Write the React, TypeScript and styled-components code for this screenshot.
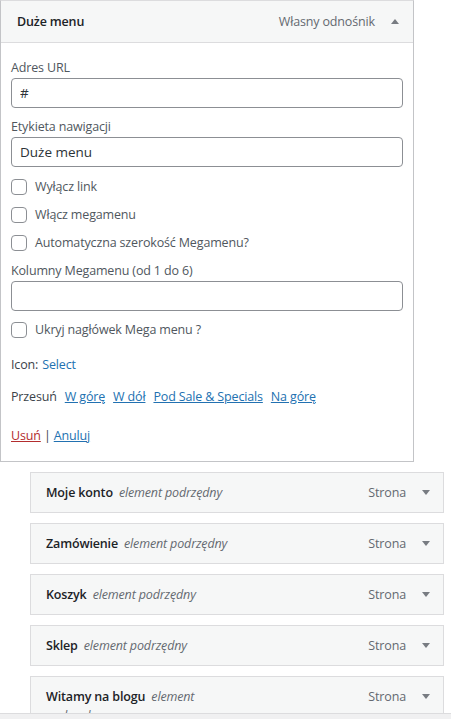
import React from 'react';
import styled, { createGlobalStyle, css } from 'styled-components';

const GlobalStyle = createGlobalStyle`
    html, body {
        margin: 0;
        padding: 0;
        background: #ffffff;
        overflow: hidden;
    }

    body {
        font-family: "Open Sans", "Noto Sans", "Liberation Sans", sans-serif;
        font-size: 12.5px;
        letter-spacing: -0.15px;
        color: #3c434a;
    }
`;

const Page = styled.div`
    display: flex;
    flex-direction: column;
    height: 100vh;
    overflow: hidden;
`;

const Content = styled.div`
    flex: 1;
    overflow: hidden;
`;

const BottomBar = styled.div`
    height: 5px;
    flex-shrink: 0;
    background: #f0f0f1;
    border-top: 1px solid #dcdcde;
`;

const Panel = styled.div`
    width: 414px;
    box-sizing: border-box;
    border: 1px solid #c3c4c7;
    border-top-color: #dcdcde;
    background: #ffffff;
`;

const Caret = styled.span<{ up?: boolean }>(
    ({ up = false }) => css`
        display: inline-block;
        width: 0;
        height: 0;
        border-left: 4px solid transparent;
        border-right: 4px solid transparent;
        ${up ? 'border-bottom: 5px solid #787c82;' : 'border-top: 5px solid #787c82;'}
    `
);

const PanelHeader = styled.div`
    display: flex;
    align-items: center;
    justify-content: space-between;
    height: 41px;
    padding: 0 14px 0 16px;
    background: #f6f7f7;
    border-bottom: 1px solid #dcdcde;
`;

const HeaderTitle = styled.span`
    font-weight: 600;
    color: #1d2327;
`;

const Controls = styled.span<{ gap?: string }>(
    ({ gap = '16px' }) => css`
        display: flex;
        align-items: center;
        gap: ${gap};
        color: #646970;
    `
);

const Settings = styled.div`
    display: flex;
    flex-direction: column;
    padding: 15px 10px 16px 10px;
`;

const Field = styled.div<{ margin?: string }>(
    ({ margin = '0 0 10px' }) => css`
        display: flex;
        flex-direction: column;
        margin: ${margin};
    `
);

const Label = styled.label`
    line-height: 19px;
    color: #50575e;
`;

const TextInput = styled.input`
    box-sizing: border-box;
    width: 100%;
    height: 30px;
    margin: 1px 0 0;
    padding: 0 8px;
    border: 1px solid #8c8f94;
    border-radius: 4px;
    font: inherit;
    font-size: 13.5px;
    color: #2c3338;
    background: #ffffff;
    outline: none;
`;

const CheckRow = styled.label<{ margin?: string }>(
    ({ margin = '0 0 9px' }) => css`
        display: flex;
        align-items: center;
        gap: 8px;
        line-height: 19px;
        color: #50575e;
        margin: ${margin};
    `
);

const Box = styled.span`
    box-sizing: border-box;
    width: 16px;
    height: 16px;
    border: 1px solid #8c8f94;
    border-radius: 4px;
    background: #ffffff;
`;

const Line = styled.p<{ margin?: string }>(
    ({ margin = '0' }) => css`
        margin: ${margin};
        line-height: 19px;
        color: #3c434a;
        display: flex;
    `
);

const Link = styled.a<{ danger?: boolean; spacing?: string }>(
    ({ danger = false, spacing = '0' }) => css`
        color: ${danger ? '#b32d2e' : '#2271b1'};
        text-decoration: underline;
        margin-left: ${spacing};
        cursor: pointer;
    `
);

const PlainLink = styled.a`
    color: #2271b1;
    text-decoration: none;
    margin-left: 4px;
`;

const Children = styled.div`
    display: flex;
    flex-direction: column;
    gap: 10px;
    padding: 10px 0 0 30px;
`;

const ItemHandle = styled.div`
    width: 414px;
    box-sizing: border-box;
    display: flex;
    align-items: flex-start;
    justify-content: space-between;
    padding: 10px 13px 10px 15px;
    line-height: 19px;
    background: #f6f7f7;
    border: 1px solid #dcdcde;
`;

const ItemTitle = styled.span`
    max-width: 200px;
    color: #1d2327;
`;

const ItemName = styled.span`
    font-weight: 600;
    margin-right: 6px;
`;

const ItemSub = styled.span`
    font-style: italic;
    color: #646970;
`;

const children = ['Moje konto', 'Zamówienie', 'Koszyk', 'Sklep', 'Witamy na blogu'];

export default function App() {
    return (
        <Page>
            <GlobalStyle />
            <Content>
                <Panel>
                    <PanelHeader>
                        <HeaderTitle>Duże menu</HeaderTitle>
                        <Controls>
                            Własny odnośnik
                            <Caret up />
                        </Controls>
                    </PanelHeader>
                    <Settings>
                        <Field margin="0 0 9px">
                            <Label>Adres URL</Label>
                            <TextInput defaultValue="#" />
                        </Field>
                        <Field margin="0 0 10px">
                            <Label>Etykieta nawigacji</Label>
                            <TextInput defaultValue="Duże menu" />
                        </Field>
                        <CheckRow>
                            <Box />
                            Wyłącz link
                        </CheckRow>
                        <CheckRow>
                            <Box />
                            Włącz megamenu
                        </CheckRow>
                        <CheckRow>
                            <Box />
                            Automatyczna szerokość Megamenu?
                        </CheckRow>
                        <Field margin="0 0 9px">
                            <Label>Kolumny Megamenu (od 1 do 6)</Label>
                            <TextInput defaultValue="" />
                        </Field>
                        <CheckRow margin="0 0 16px">
                            <Box />
                            Ukryj nagłówek Mega menu ?
                        </CheckRow>
                        <Line margin="0 0 13px">
                            <span>Icon:</span>
                            <PlainLink>Select</PlainLink>
                        </Line>
                        <Line margin="0 0 20px">
                            <span>Przesuń</span>
                            <Link spacing="8px">W górę</Link>
                            <Link spacing="8px">W dół</Link>
                            <Link spacing="8px">Pod Sale &amp; Specials</Link>
                            <Link spacing="8px">Na górę</Link>
                        </Line>
                        <Line>
                            <Link danger>Usuń</Link>
                            <span>&nbsp;|&nbsp;</span>
                            <Link>Anuluj</Link>
                        </Line>
                    </Settings>
                </Panel>
                <Children>
                    {children.map((name) => (
                        <ItemHandle key={name}>
                            <ItemTitle>
                                <ItemName>{name}</ItemName>
                                <ItemSub>element podrzędny</ItemSub>
                            </ItemTitle>
                            <Controls>
                                Strona
                                <Caret />
                            </Controls>
                        </ItemHandle>
                    ))}
                </Children>
            </Content>
            <BottomBar />
        </Page>
    );
}
